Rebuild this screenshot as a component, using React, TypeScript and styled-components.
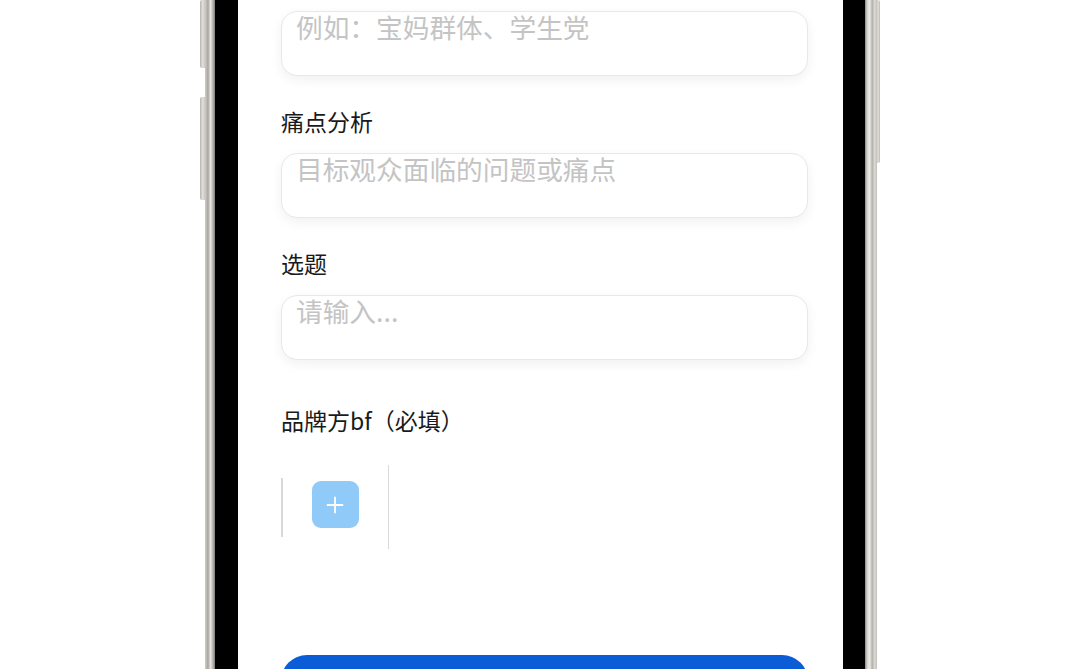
import React from "react";
import styled, { createGlobalStyle } from "styled-components";

const Global = createGlobalStyle`
  html, body { margin: 0; padding: 0; background: #ffffff; overflow: hidden; }
  body { font-family: "Noto Sans CJK SC", "Noto Sans", sans-serif; }
  * { box-sizing: border-box; }
`;

const Stage = styled.div`
  width: 1080px;
  height: 669px;
  display: flex;
  justify-content: center;
  background: #ffffff;
  overflow: hidden;
`;

const Phone = styled.div`
  display: flex;
  height: 669px;
`;

const SideLeft = styled.div`
  display: flex;
  height: 100%;
`;

const SideRight = styled.div`
  display: flex;
  height: 100%;
`;

const ButtonColumn = styled.div<{ $w: number }>`
  width: ${(p) => p.$w}px;
  display: flex;
  flex-direction: column;
`;

const SideButton = styled.div<{ $h: number; $gap?: number; $right?: boolean }>`
  height: ${(p) => p.$h}px;
  margin-top: ${(p) => p.$gap ?? 0}px;
  background: ${(p) =>
    p.$right
      ? "linear-gradient(90deg, #cfccc6 0%, #e2dfda 40%, #b9b6b0 100%)"
      : "linear-gradient(90deg, #b8b5b0 0%, #e4e1dc 55%, #c9c6c1 100%)"};
  border-radius: ${(p) => (p.$right ? "0 2px 2px 0" : "2px 0 0 2px")};
`;

const Rail = styled.div<{ $w: number; $right?: boolean }>`
  width: ${(p) => p.$w}px;
  height: 100%;
  background: ${(p) =>
    p.$right
      ? "linear-gradient(90deg, #8d8a86 0%, #d9d6d0 20%, #ecebe7 40%, #b3b0ab 60%, #dcd9d4 80%, #c2bfba 100%)"
      : "linear-gradient(90deg, #d0cdc8 0%, #a9a6a1 30%, #e6e4e0 55%, #b5b2ad 80%, #7c7a77 100%)"};
`;

const Bezel = styled.div<{ $w: number }>`
  width: ${(p) => p.$w}px;
  height: 100%;
  background: #000000;
`;

const Screen = styled.div`
  width: 605px;
  height: 100%;
  background: #ffffff;
  padding: 11px 35px 0 43px;
  display: flex;
  flex-direction: column;
  overflow: hidden;
`;

const Label = styled.div<{ $top: number }>`
  margin-top: ${(p) => p.$top}px;
  font-size: 23px;
  line-height: 26px;
  height: 30px;
  padding-bottom: 4px;
  color: #1a1a1a;
  white-space: nowrap;
  font-family: "Noto Sans CJK SC", sans-serif;
`;

const Field = styled.textarea<{ $top: number }>`
  margin-top: ${(p) => p.$top}px;
  width: 100%;
  height: 65px;
  flex: 0 0 65px;
  resize: none;
  border: 1px solid #e8e8e8;
  border-radius: 16px;
  background: #ffffff;
  box-shadow: 0 4px 12px rgba(0, 0, 0, 0.06);
  padding: 0 14px 0;
  font-family: "Noto Sans CJK SC", sans-serif;
  font-size: 26.7px;
  line-height: 30px;
  color: #333;
  outline: none;
  &::placeholder {
    color: #c4c4c4;
  }
`;

const UploadTile = styled.div`
  margin-top: 28px;
  width: 108px;
  height: 84px;
  flex: 0 0 84px;
  display: flex;
  align-items: center;
  border-right: 1.5px solid #d9d9d9;
`;

const TileEdge = styled.div`
  width: 1.5px;
  height: 59px;
  background: #d9d9d9;
`;

const TileBody = styled.div`
  flex: 1;
  display: flex;
  justify-content: center;
  align-items: center;
  padding-bottom: 5px;
`;

const AddButton = styled.div`
  width: 47px;
  height: 47px;
  border-radius: 9px;
  background: #90caf9;
  display: flex;
  align-items: center;
  justify-content: center;
`;

const SubmitBar = styled.div`
  margin-top: 106px;
  width: 100%;
  height: 52px;
  flex: 0 0 52px;
  border-radius: 26px;
  background: #0a5dd6;
`;

export default function App() {
  return (
    <>
      <Global />
      <Stage>
        <Phone>
          <SideLeft>
            <ButtonColumn $w={5}>
              <SideButton $h={68} />
              <SideButton $h={103} $gap={29} />
            </ButtonColumn>
            <Rail $w={10} />
          </SideLeft>
          <Bezel $w={23} />
          <Screen>
            <Field $top={0} placeholder="例如：宝妈群体、学生党" />
            <Label $top={32}>痛点分析</Label>
            <Field $top={15} placeholder="目标观众面临的问题或痛点" />
            <Label $top={32}>选题</Label>
            <Field $top={15} placeholder="请输入..." />
            <Label $top={47}>品牌方bf（必填）</Label>
            <UploadTile>
              <TileEdge />
              <TileBody>
                <AddButton>
                  <svg width="18" height="18" viewBox="0 0 18 18">
                    <path d="M9 1.5v15M1.5 9h15" stroke="#ffffff" strokeWidth="1.8" strokeLinecap="round" />
                  </svg>
                </AddButton>
              </TileBody>
            </UploadTile>
            <SubmitBar />
          </Screen>
          <Bezel $w={22} />
          <SideRight>
            <Rail $w={12} $right />
            <ButtonColumn $w={3}>
              <SideButton $h={163} $right />
            </ButtonColumn>
          </SideRight>
        </Phone>
      </Stage>
    </>
  );
}
